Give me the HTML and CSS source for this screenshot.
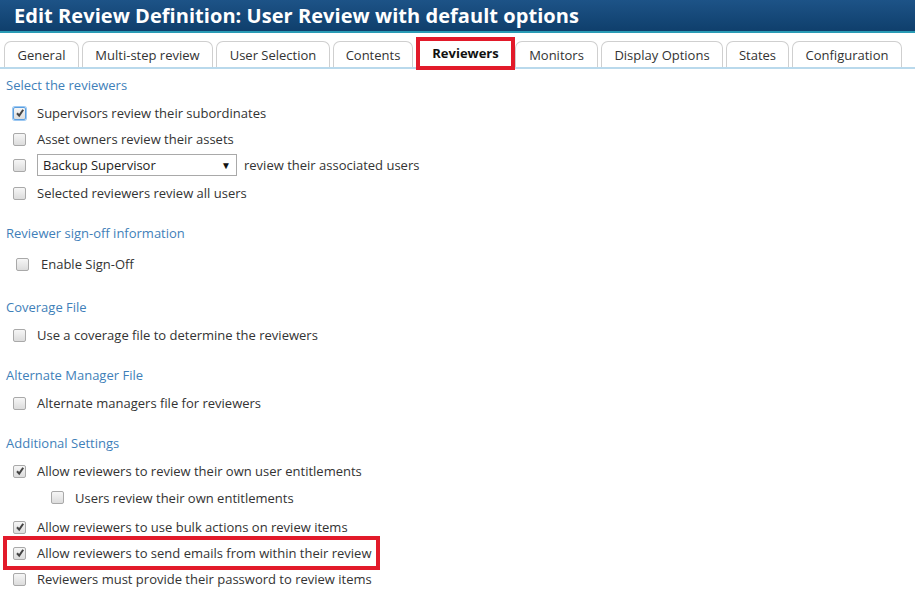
FILE: index.html
```html
<!DOCTYPE html>
<html lang="en">
<head>
    <meta charset="UTF-8">
    <title>Edit Review Definition</title>
    <link rel="stylesheet" href="styles.css">
</head>
<body>
    <div class="page-title">Edit Review Definition: User Review with default options</div>

    <div class="tabs">
        <div class="tab" style="width:75px">General</div>
        <div class="tab" style="width:131px">Multi-step review</div>
        <div class="tab" style="width:114px">User Selection</div>
        <div class="tab" style="width:80px">Contents</div>
        <div class="tab active" style="width:99px">Reviewers</div>
        <div class="tab" style="width:83px">Monitors</div>
        <div class="tab" style="width:122px">Display Options</div>
        <div class="tab" style="width:63px">States</div>
        <div class="tab" style="width:110px">Configuration</div>
    </div>

    <div class="content">
        <div class="section">
            <div class="section-title">Select the reviewers</div>
            <div class="row first"><span class="box checked focus"><svg viewBox="0 0 10 10"><path d="M2 5.2 L4.2 7.6 L8.2 1.8" /></svg></span>Supervisors review their subordinates</div>
            <div class="row"><span class="box"></span>Asset owners review their assets</div>
            <div class="row"><span class="box"></span><span class="select">Backup Supervisor<span class="arrow">&#9660;</span></span>review their associated users</div>
            <div class="row after-select"><span class="box"></span>Selected reviewers review all users</div>
        </div>

        <div class="section signoff-section">
            <div class="section-title">Reviewer sign-off information</div>
            <div class="row signoff"><span class="box"></span>Enable Sign-Off</div>
        </div>

        <div class="section">
            <div class="section-title">Coverage File</div>
            <div class="row first"><span class="box"></span>Use a coverage file to determine the reviewers</div>
        </div>

        <div class="section">
            <div class="section-title">Alternate Manager File</div>
            <div class="row first"><span class="box"></span>Alternate managers file for reviewers</div>
        </div>

        <div class="section">
            <div class="section-title">Additional Settings</div>
            <div class="row first"><span class="box checked"><svg viewBox="0 0 10 10"><path d="M2 5.2 L4.2 7.6 L8.2 1.8" /></svg></span>Allow reviewers to review their own user entitlements</div>
            <div class="row sub"><span class="box"></span>Users review their own entitlements</div>
            <div class="row gap"><span class="box checked"><svg viewBox="0 0 10 10"><path d="M2 5.2 L4.2 7.6 L8.2 1.8" /></svg></span>Allow reviewers to use bulk actions on review items</div>
            <div class="row highlight"><span class="box checked"><svg viewBox="0 0 10 10"><path d="M2 5.2 L4.2 7.6 L8.2 1.8" /></svg></span>Allow reviewers to send emails from within their review</div>
            <div class="row"><span class="box"></span>Reviewers must provide their password to review items</div>
        </div>
    </div>
</body>
</html>
```

FILE: styles.css
```css
body {
    margin: 0;
    font-family: 'Open Sans', 'Liberation Sans', sans-serif;
    font-size: 13px;
    color: #333;
    background-color: white;
}
.page-title {
    height: 31px;
    line-height: 31px;
    padding-left: 14px;
    background: linear-gradient(to bottom, #1d5387, #0f3f6c);
    border-bottom: 2px solid #2a9bb5;
    color: white;
    font-size: 20px;
    font-weight: bold;
    letter-spacing: 0.05px;
}
.tabs {
    display: flex;
    gap: 3px;
    margin-top: 8px;
    padding-left: 4px;
    border-bottom: 2px solid #b9d9ec;
    height: 26px;
}
.tab {
    box-sizing: border-box;
    height: 26px;
    line-height: 27px;
    text-align: center;
    border: 1px solid #cfcfcf;
    border-bottom: none;
    border-radius: 7px 7px 0 0;
    color: #333;
}
.tab.active {
    position: relative;
    top: -4px;
    height: 33px;
    margin-right: -3px;
    border: 4px solid #e21a2a;
    border-radius: 0;
    line-height: 24px;
    background: white;
    font-weight: bold;
    color: #111;
}
.content {
    padding: 0 6px;
}
.section {
    margin-bottom: 18px;
}
.signoff-section {
    padding-bottom: 3px;
}
.section-title {
    color: #3f7fb9;
    height: 18px;
    line-height: 18px;
    margin-top: 7px;
}
.row {
    display: flex;
    align-items: center;
    height: 26px;
    color: #333;
}
.row.first {
    margin-top: 6px;
}
.row.after-select {
    margin-top: 2px;
}
.row.signoff {
    margin-top: 9px;
    padding-left: 3px;
}
.row.signoff .box {
    margin-right: 12px;
}
.row.sub {
    padding-left: 38px;
    height: 27px;
}
.row.gap {
    margin-top: 3px;
}
.row.highlight {
    margin-left: 1px;
    width: 369px;
    outline: 4px solid #e21a2a;
}
.row.highlight .box {
    margin-left: 6px;
}
.box {
    box-sizing: border-box;
    width: 13px;
    height: 13px;
    margin-left: 7px;
    margin-right: 11px;
    border: 1px solid #a9a9a9;
    border-radius: 2px;
    background: linear-gradient(to bottom, #f6f6f6, #dcdcdc);
    display: flex;
    align-items: center;
    justify-content: center;
    flex-shrink: 0;
}
.box svg {
    width: 10px;
    height: 10px;
}
.box svg path {
    fill: none;
    stroke: #444;
    stroke-width: 2;
}
.box.focus {
    border-color: #5a9ee0;
    box-shadow: 0 0 0 1px #9cc8f2;
}
.select {
    box-sizing: border-box;
    display: flex;
    align-items: center;
    justify-content: space-between;
    width: 200px;
    height: 22px;
    padding: 0 5px;
    margin-right: 7px;
    border: 1px solid #a9a9a9;
    color: #222;
}
.arrow {
    font-size: 10px;
    color: #111;
}
```
